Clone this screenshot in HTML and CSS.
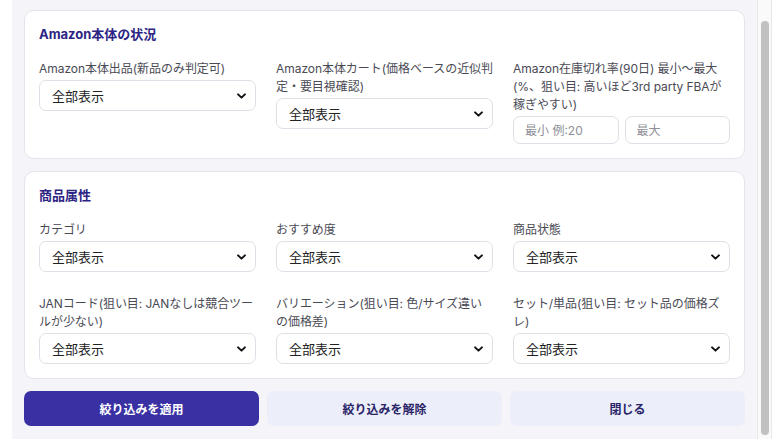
FILE: index.html
```html
<!DOCTYPE html>
<html lang="ja">
<head>
  <meta charset="UTF-8">
  <meta name="viewport" content="width=device-width, initial-scale=1">
  <title>絞り込み</title>
  <link rel="stylesheet" href="styles.css">
</head>
<body>
  <div class="panel">
    <div class="panel-body">

      <!-- Amazon本体 -->
      <section class="card">
        <h3 class="card-title">Amazon本体の状況</h3>
        <div class="grid">
          <div class="field">
            <label>Amazon本体出品(新品のみ判定可)</label>
            <div class="select-wrap">
              <select><option>全部表示</option></select>
              <svg class="chev" viewBox="0 0 10 6" width="9" height="6"><path d="M1.2 1.2l3.8 3.6 3.8-3.6" fill="none" stroke="#111" stroke-width="2.2" stroke-linecap="round" stroke-linejoin="round"/></svg>
            </div>
          </div>
          <div class="field">
            <label>Amazon本体カート(価格ベースの近似判定・要目視確認)</label>
            <div class="select-wrap">
              <select><option>全部表示</option></select>
              <svg class="chev" viewBox="0 0 10 6" width="9" height="6"><path d="M1.2 1.2l3.8 3.6 3.8-3.6" fill="none" stroke="#111" stroke-width="2.2" stroke-linecap="round" stroke-linejoin="round"/></svg>
            </div>
          </div>
          <div class="field">
            <label>Amazon在庫切れ率(90日) 最小〜最大(%、狙い目: 高いほど3rd party FBAが稼ぎやすい)</label>
            <div class="range">
              <input type="text" placeholder="最小 例:20">
              <input type="text" placeholder="最大">
            </div>
          </div>
        </div>
      </section>

      <!-- 商品属性 -->
      <section class="card">
        <h3 class="card-title">商品属性</h3>
        <div class="grid">
          <div class="field">
            <label>カテゴリ</label>
            <div class="select-wrap">
              <select><option>全部表示</option></select>
              <svg class="chev" viewBox="0 0 10 6" width="9" height="6"><path d="M1.2 1.2l3.8 3.6 3.8-3.6" fill="none" stroke="#111" stroke-width="2.2" stroke-linecap="round" stroke-linejoin="round"/></svg>
            </div>
          </div>
          <div class="field">
            <label>おすすめ度</label>
            <div class="select-wrap">
              <select><option>全部表示</option></select>
              <svg class="chev" viewBox="0 0 10 6" width="9" height="6"><path d="M1.2 1.2l3.8 3.6 3.8-3.6" fill="none" stroke="#111" stroke-width="2.2" stroke-linecap="round" stroke-linejoin="round"/></svg>
            </div>
          </div>
          <div class="field">
            <label>商品状態</label>
            <div class="select-wrap">
              <select><option>全部表示</option></select>
              <svg class="chev" viewBox="0 0 10 6" width="9" height="6"><path d="M1.2 1.2l3.8 3.6 3.8-3.6" fill="none" stroke="#111" stroke-width="2.2" stroke-linecap="round" stroke-linejoin="round"/></svg>
            </div>
          </div>
          <div class="field">
            <label>JANコード(狙い目: JANなしは競合ツールが少ない)</label>
            <div class="select-wrap">
              <select><option>全部表示</option></select>
              <svg class="chev" viewBox="0 0 10 6" width="9" height="6"><path d="M1.2 1.2l3.8 3.6 3.8-3.6" fill="none" stroke="#111" stroke-width="2.2" stroke-linecap="round" stroke-linejoin="round"/></svg>
            </div>
          </div>
          <div class="field">
            <label>バリエーション(狙い目: 色/サイズ違いの価格差)</label>
            <div class="select-wrap">
              <select><option>全部表示</option></select>
              <svg class="chev" viewBox="0 0 10 6" width="9" height="6"><path d="M1.2 1.2l3.8 3.6 3.8-3.6" fill="none" stroke="#111" stroke-width="2.2" stroke-linecap="round" stroke-linejoin="round"/></svg>
            </div>
          </div>
          <div class="field">
            <label>セット/単品(狙い目: セット品の価格ズレ)</label>
            <div class="select-wrap">
              <select><option>全部表示</option></select>
              <svg class="chev" viewBox="0 0 10 6" width="9" height="6"><path d="M1.2 1.2l3.8 3.6 3.8-3.6" fill="none" stroke="#111" stroke-width="2.2" stroke-linecap="round" stroke-linejoin="round"/></svg>
            </div>
          </div>
        </div>
      </section>

      <div class="actions">
        <button type="button" class="btn btn-primary">絞り込みを適用</button>
        <button type="button" class="btn">絞り込みを解除</button>
        <button type="button" class="btn">閉じる</button>
      </div>
    </div>

    <div class="scrollbar"><div class="thumb"></div></div>
  </div>
</body>
</html>
```

FILE: styles.css
```css
body {
  margin: 0;
  background: #fff;
  font-family: "Inter", "Noto Sans CJK JP", sans-serif;
  color: #222;
}
.panel {
  display: flex;
  margin-left: 12px;
  width: 760px;
  height: 439px;
  background: #f4f4f9;
  overflow: hidden;
}
.panel-body {
  flex: 1;
  min-width: 0;
  padding: 10px 12px 0;
}
.scrollbar {
  width: 13px;
  background: #fafafa;
  border-left: 1px solid #e8e8e8;
  border-right: 1px solid #e8e8e8;
  display: flex;
  justify-content: center;
}
.thumb {
  width: 8px;
  height: 414px;
  margin-top: 21px;
  border-radius: 4px;
  background: #c1c1c1;
}
.card {
  background: #fff;
  border: 1px solid #e4e4ed;
  border-radius: 10px;
  padding: 14px;
  margin-bottom: 12px;
}
.card-title {
  margin: 0 0 17px;
  font-size: 13px;
  line-height: 18px;
  font-weight: 700;
  color: #2c2483;
}
.grid {
  display: grid;
  grid-template-columns: repeat(3, minmax(0, 1fr));
  column-gap: 20px;
  row-gap: 23px;
  align-items: start;
}
.field label {
  display: block;
  font-size: 12px;
  line-height: 18px;
  letter-spacing: -0.05px;
  color: #4a4a55;
  margin-bottom: 2px;
}
.select-wrap {
  position: relative;
}
select {
  -webkit-appearance: none;
  appearance: none;
  width: 100%;
  height: 31px;
  padding: 0 28px 0 12px;
  font-family: inherit;
  font-size: 13px;
  color: #222;
  background: #fff;
  border: 1px solid #dfdfe7;
  border-radius: 7px;
}
.chev {
  position: absolute;
  right: 10px;
  top: 13px;
  pointer-events: none;
}
.range {
  display: flex;
  gap: 6px;
}
.range input {
  flex: 1;
  min-width: 0;
  height: 28px;
  box-sizing: border-box;
  padding: 0 11px;
  font-family: inherit;
  font-size: 12px;
  border: 1px solid #dfdfe7;
  border-radius: 7px;
}
.range input::placeholder {
  color: #8e8e96;
}
.actions {
  display: grid;
  grid-template-columns: repeat(3, minmax(0, 1fr));
  gap: 8px;
}
.btn {
  height: 35px;
  border: none;
  border-radius: 7px;
  background: #eceef9;
  color: #2a2468;
  font-family: inherit;
  font-size: 12px;
  font-weight: 700;
  cursor: pointer;
}
.btn-primary {
  background: #3930a3;
  color: #fff;
}
```
